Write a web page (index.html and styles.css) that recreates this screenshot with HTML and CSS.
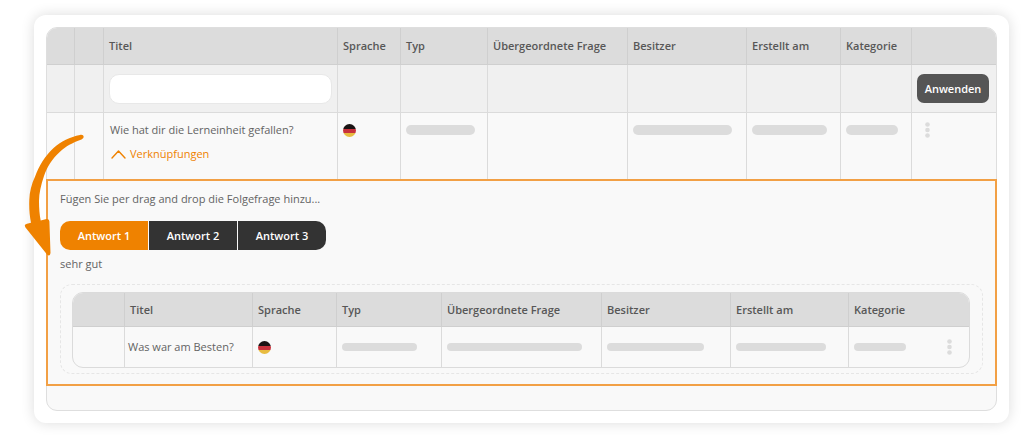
FILE: index.html
```html
<!DOCTYPE html>
<html lang="de">
<head>
    <meta charset="UTF-8">
    <meta name="viewport" content="width=device-width, initial-scale=1.0">
    <title>Fragen</title>
    <link rel="stylesheet" href="styles.css">
</head>
<body>

    <main class="card">
        <div class="frame">
            <table class="questions">
                <colgroup>
                    <col class="col-drag">
                    <col class="col-check">
                    <col class="col-title">
                    <col class="col-lang">
                    <col class="col-type">
                    <col class="col-parent">
                    <col class="col-owner">
                    <col class="col-date">
                    <col class="col-category">
                    <col class="col-actions">
                </colgroup>
                <thead>
                    <tr>
                        <th></th>
                        <th></th>
                        <th>Titel</th>
                        <th>Sprache</th>
                        <th>Typ</th>
                        <th>Übergeordnete Frage</th>
                        <th>Besitzer</th>
                        <th>Erstellt am</th>
                        <th>Kategorie</th>
                        <th></th>
                    </tr>
                </thead>
                <tbody>
                    <tr class="filter">
                        <td></td>
                        <td></td>
                        <td><input type="text" class="filter-input" name="title" aria-label="Titel"></td>
                        <td></td>
                        <td></td>
                        <td></td>
                        <td></td>
                        <td></td>
                        <td></td>
                        <td><button type="submit" class="apply">Anwenden</button></td>
                    </tr>
                    <tr class="question">
                        <td></td>
                        <td></td>
                        <td class="title">
                            Wie hat dir die Lerneinheit gefallen?
                            <button type="button" class="links-toggle" aria-expanded="true">
                                <svg width="16" height="9" viewBox="0 0 16 9" aria-hidden="true"><path d="M2 8 L8.5 1 L15 8" fill="none" stroke="currentColor" stroke-width="1.4" stroke-linecap="round" stroke-linejoin="round"/></svg>
                                Verknüpfungen
                            </button>
                        </td>
                        <td><span class="flag"></span></td>
                        <td><span class="bar bar-type"></span></td>
                        <td></td>
                        <td><span class="bar bar-owner"></span></td>
                        <td><span class="bar bar-date"></span></td>
                        <td><span class="bar bar-category"></span></td>
                        <td>
                            <button type="button" class="more" aria-label="Aktionen">
                                <svg width="5" height="16" viewBox="0 0 5 16" aria-hidden="true"><circle cx="2.5" cy="2.5" r="2.3"/><circle cx="2.5" cy="8" r="2.3"/><circle cx="2.5" cy="13.5" r="2.3"/></svg>
                            </button>
                        </td>
                    </tr>
                </tbody>
            </table>

            <section class="panel">
                <p class="hint">Fügen Sie per drag and drop die Folgefrage hinzu...</p>
                <div class="tabs">
                    <button type="button" class="tab active">Antwort 1</button>
                    <button type="button" class="tab">Antwort 2</button>
                    <button type="button" class="tab">Antwort 3</button>
                </div>
                <p class="answer">sehr gut</p>

                <div class="dropzone">
                    <table class="followups">
                        <colgroup>
                            <col class="sub-drag">
                            <col class="sub-title">
                            <col class="sub-lang">
                            <col class="sub-type">
                            <col class="sub-parent">
                            <col class="sub-owner">
                            <col class="sub-date">
                            <col class="sub-category">
                        </colgroup>
                        <thead>
                            <tr>
                                <th></th>
                                <th>Titel</th>
                                <th>Sprache</th>
                                <th>Typ</th>
                                <th>Übergeordnete Frage</th>
                                <th>Besitzer</th>
                                <th>Erstellt am</th>
                                <th>Kategorie</th>
                            </tr>
                        </thead>
                        <tbody>
                            <tr>
                                <td></td>
                                <td class="title">Was war am Besten?</td>
                                <td><span class="flag"></span></td>
                                <td><span class="bar bar-type"></span></td>
                                <td><span class="bar bar-parent"></span></td>
                                <td><span class="bar bar-owner"></span></td>
                                <td><span class="bar bar-date"></span></td>
                                <td>
                                    <div class="last-cell">
                                        <span class="bar bar-category"></span>
                                        <button type="button" class="more" aria-label="Aktionen">
                                            <svg width="5" height="16" viewBox="0 0 5 16" aria-hidden="true"><circle cx="2.5" cy="2.5" r="2.3"/><circle cx="2.5" cy="8" r="2.3"/><circle cx="2.5" cy="13.5" r="2.3"/></svg>
                                        </button>
                                    </div>
                                </td>
                            </tr>
                        </tbody>
                    </table>
                </div>
            </section>
        </div>

        <svg class="arrow" width="60" height="126" viewBox="0 0 60 126" aria-hidden="true">
            <path d="M55 4 C59 3 60 7 56.500 8.500 C47 12 41 15 35 20.700 C27 28 22 36 19 45 C16 54 14 62 14 70 C14 77 14.500 84 15.700 89.500 L21.500 88 Q24.300 87.500 24.400 90.500 L25.500 122 Q25 126 22 123.500 L0.500 96.500 Q-1.500 93.500 2 92.800 L6 91.800 C4.500 84 4 77 4.300 69 C4.500 61 6.500 53 10 45.700 C14 35 20 25 28.300 17.300 C36 10 45 6 55 4 Z" fill="#ef8200"/>
        </svg>
    </main>

</body>
</html>
```
FILE: styles.css
```css
* {
    box-sizing: border-box;
}

body {
    font-family: "Open Sans", "Noto Sans", sans-serif;
    font-size: 11px;
    line-height: 16px;
    margin: 0;
    padding: 15px 15px 15px 34px;
    background-color: #fff;
    color: #636363;
}

button,
input {
    font: inherit;
    border: none;
    padding: 0;
}

button {
    cursor: pointer;
}

p {
    margin: 0;
}

.card {
    position: relative;
    padding: 12px;
    background-color: #fff;
    border-radius: 12px;
    box-shadow: 0 0 14px rgba(0, 0, 0, 0.14);
}

.frame {
    padding-bottom: 24px;
    background-color: #f9f9f9;
    border: 1px solid #dedede;
    border-radius: 11px;
}

/* tables */
table {
    width: 100%;
    table-layout: fixed;
    border-collapse: separate;
    border-spacing: 0;
}

th,
td {
    padding: 0 5px;
    border-right: 1px solid #dbdbdb;
    text-align: left;
}

th {
    background-color: #dcdcdc;
    border-right-color: #cfcfcf;
    border-bottom: 1px solid #cfcfcf;
    color: #575757;
    font-weight: 600;
    white-space: nowrap;
}

th:last-child,
td:last-child {
    border-right: none;
}

th:first-child {
    border-top-left-radius: 10px;
}

th:last-child {
    border-top-right-radius: 10px;
}

.questions th {
    height: 37px;
}

.col-drag { width: 28px; }
.col-check { width: 29px; }
.col-lang { width: 63px; }
.col-type { width: 87px; }
.col-parent { width: 140px; }
.col-owner { width: 119px; }
.col-date { width: 94px; }
.col-category { width: 71px; }
.col-actions { width: 84px; }

.filter td {
    height: 48px;
    background-color: #f0f0f0;
    border-bottom: 1px solid #dbdbdb;
}

.filter-input {
    display: block;
    width: 100%;
    height: 30px;
    padding: 0 10px;
    background-color: #fff;
    border: 1px solid #e8e8e8;
    border-radius: 10px;
}

.apply {
    display: block;
    width: 72px;
    height: 29px;
    background-color: #555;
    color: #fff;
    border-radius: 7px;
    font-weight: 600;
}

.question td {
    height: 66px;
    padding-top: 9px;
    vertical-align: top;
}

.question .title {
    padding-left: 6px;
}

.links-toggle {
    display: flex;
    align-items: center;
    gap: 4px;
    margin-top: 8px;
    background: none;
    color: #ef8200;
}

.flag {
    display: block;
    width: 13px;
    height: 13px;
    margin: 2px 0;
    border-radius: 50%;
    background: linear-gradient(#1a1414 36%, #c8323c 36%, #c8323c 66%, #e8bc40 66%);
}

.bar {
    display: block;
    height: 10px;
    margin: 3px 0;
    border-radius: 5px;
    background-color: #dcdcdc;
}

.bar-type { width: 69px; }
.bar-owner { width: 99px; }
.bar-date { width: 75px; }
.bar-category { width: 52px; }

.more {
    display: block;
    background: none;
    fill: #dcdcdc;
}

.more svg {
    display: block;
}

.question .more {
    margin-left: 8px;
}

/* follow-up panel */
.panel {
    margin: 0 -1px;
    padding: 10px 12px;
    border: 2px solid #f2a045;
}

.tabs {
    display: flex;
    gap: 1px;
    margin: 14px 0 6px;
}

.tab {
    width: 88px;
    height: 29px;
    background-color: #333;
    color: #fff;
    font-weight: 600;
}

.tab.active {
    background-color: #ef8200;
}

.tab:first-child {
    border-radius: 10px 0 0 10px;
}

.tab:last-child {
    border-radius: 0 10px 10px 0;
}

.dropzone {
    margin-top: 12px;
    padding: 7px 12px 5px 11px;
    border: 1px dashed #e6e6e6;
    border-radius: 12px;
}

.followups {
    border: 1px solid #dbdbdb;
    border-radius: 11px;
}

.followups th {
    height: 34px;
}

.followups td {
    height: 40px;
}

.followups .title {
    padding-left: 3px;
    white-space: nowrap;
}

.followups .bar {
    height: 8px;
    border-radius: 4px;
}

.sub-drag { width: 52px; }
.sub-title { width: 128px; }
.sub-lang { width: 84px; }
.sub-type { width: 105px; }
.sub-owner { width: 129px; }
.sub-date { width: 118px; }
.sub-category { width: 120px; }

.followups .bar-type { width: 75px; }
.followups .bar-parent { width: 135px; }
.followups .bar-owner { width: 97px; }
.followups .bar-date { width: 90px; }

.last-cell {
    display: flex;
    align-items: center;
    justify-content: space-between;
    padding-right: 12px;
}

.arrow {
    position: absolute;
    top: 116px;
    left: -9px;
    overflow: visible;
}
```
